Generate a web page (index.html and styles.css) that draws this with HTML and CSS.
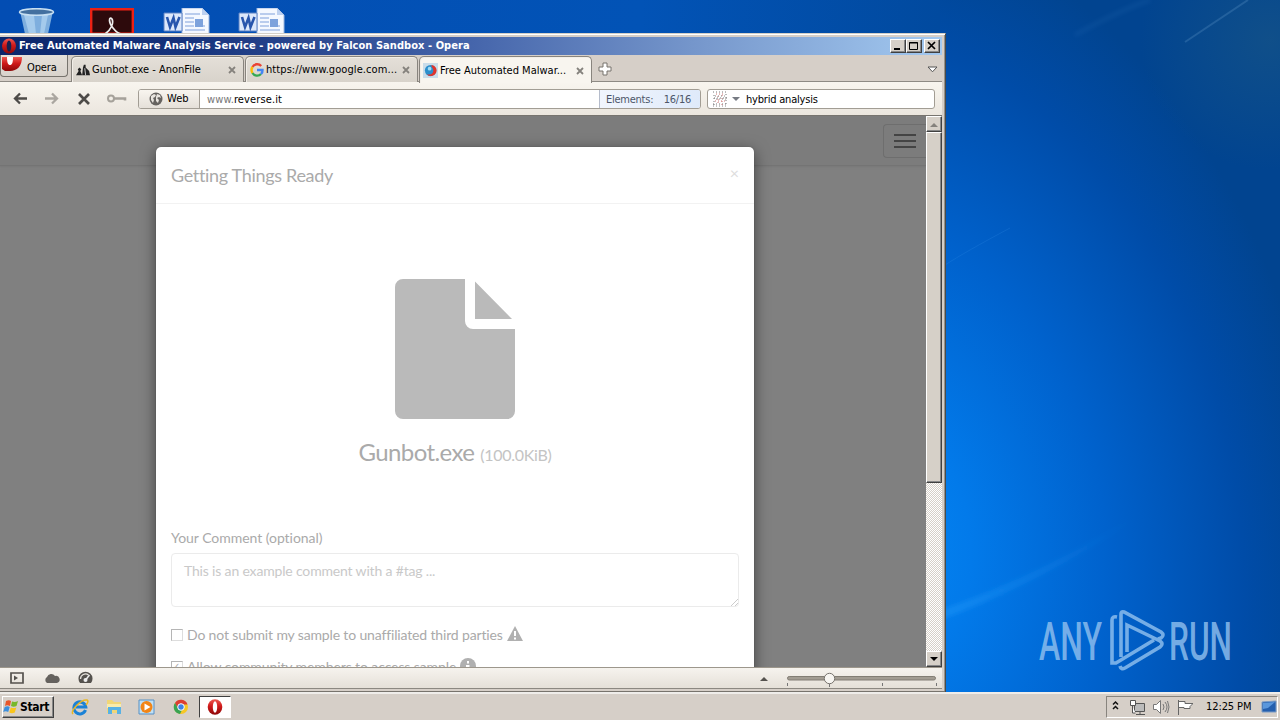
FILE: index.html
```html
<!DOCTYPE html>
<html lang="en">
<head>
<meta charset="utf-8">
<title>Desktop</title>
<link rel="stylesheet" href="styles.css">
</head>
<body>
<svg width="0" height="0" class="defs">
  <defs>
    <linearGradient id="red" x1="0" y1="0" x2="0" y2="1"><stop offset="0" stop-color="#ee5a52"/><stop offset=".45" stop-color="#d01a1a"/><stop offset="1" stop-color="#8c0808"/></linearGradient>
    <symbol id="opera" viewBox="0 0 16 16"><ellipse cx="8" cy="8" rx="7.3" ry="7.8" fill="url(#red)"/><ellipse cx="8" cy="8" rx="2.2" ry="5.8" fill="#fff"/></symbol>
    <symbol id="operadark" viewBox="0 0 16 16"><ellipse cx="8" cy="8" rx="7" ry="7.6" fill="url(#red)"/><ellipse cx="8" cy="8" rx="2.3" ry="5.6" fill="#16224f"/></symbol>
    <symbol id="word" viewBox="0 0 48 26"><path d="M19 0h20l7 7v19H19z" fill="#f4f8ff" stroke="#9db6dd"/><path d="M39 0v7h7z" fill="#bcd0f0"/><path d="M22 6h15M22 10h9M22 14h9M22 18h9M22 22h20M33 18h9" stroke="#7ea0dc" stroke-width="1.2"/><path d="M32 11h8v8h-8z" fill="#7da2dc"/><path d="M1 5h18v18H1z" fill="#dce8fb" stroke="#5d82c4"/><path d="M4 9l3 10 3.5-9 2 9 4-10" fill="none" stroke="#2856ad" stroke-width="2.6"/></symbol>
    <symbol id="x" viewBox="0 0 8 8"><path d="M1 1l6 6M7 1L1 7" stroke="#85827d" stroke-width="1.8"/></symbol>
  </defs>
</svg>
<div class="screen">
  <main class="desktop">
    <svg class="wallpaper" width="1280" height="692" viewBox="0 0 1280 692">
      <defs>
        <linearGradient id="top" x1="0" x2="1"><stop offset="0" stop-color="#034db3"/><stop offset=".5" stop-color="#0253b6"/><stop offset=".734" stop-color="#014a9f"/><stop offset="1" stop-color="#0d467b"/></linearGradient>
        <radialGradient id="glow" gradientUnits="userSpaceOnUse" cx="0" cy="0" r="1" gradientTransform="translate(880 540) rotate(-9) scale(450 640)"><stop offset="0" stop-color="#0487f4"/><stop offset=".2" stop-color="#027aea"/><stop offset=".5" stop-color="#0062cd"/><stop offset=".8" stop-color="#004ca8"/><stop offset="1" stop-color="#014490"/></radialGradient>
        <radialGradient id="haze" gradientUnits="userSpaceOnUse" cx="1270" cy="40" r="130"><stop offset="0" stop-color="#1c5884" stop-opacity=".55"/><stop offset="1" stop-color="#1c5884" stop-opacity="0"/></radialGradient>
        <linearGradient id="ray" x1="0" x2="1"><stop offset="0" stop-color="#2da6ff" stop-opacity=".32"/><stop offset="1" stop-color="#2da6ff" stop-opacity="0"/></linearGradient>
        <filter id="soft"><feGaussianBlur stdDeviation="2"/></filter>
      </defs>
      <path fill="url(#top)" d="M0 0h1280v692H0z"/>
      <path fill="url(#glow)" d="M940 0h340v692H940z"/>
      <path fill="url(#haze)" d="M1080 0h200v200h-200z"/>
      <path d="M935 612Q1030 580 1140 514Q1050 580 935 622z" fill="url(#ray)" filter="url(#soft)"/>
      <path d="M1185 42L1248 0" stroke="#5d94c6" stroke-width="2" opacity=".3"/>
      <path d="M945 265Q965 252 1010 228" fill="none" stroke="#3a98ea" opacity=".2"/>
      <path d="M1075 35Q1120 10 1150 0" fill="none" stroke="#3a80c4" stroke-width="4" opacity=".15" filter="url(#soft)"/>
    </svg>
    <div class="shortcuts">
      <svg width="38" height="26" viewBox="0 0 38 26"><path d="M2 3l5 23h23l5-23z" fill="#7eaede"/><path d="M6 7l5 19h7L16 7zM30 7l-4 19h-4l2-19z" fill="#b9d8f2" opacity=".65"/><ellipse cx="18.500" cy="4" rx="17" ry="3.300" fill="#44709f" stroke="#c7dff2" stroke-width="1.500"/></svg>
      <svg width="44" height="26" viewBox="0 0 44 26"><path d="M1 1h42v25H1z" fill="#2d0a0c" stroke="#ed2114" stroke-width="2.800"/><path d="M15 26c6-4 9-11 7-15-3-3-4 3 1 9 3 4 6 6 9 6" fill="none" stroke="#eee" stroke-width="1.700"/></svg>
      <svg width="48" height="26"><use href="#word"/></svg>
      <svg width="48" height="26"><use href="#word"/></svg>
    </div>

    <section class="window">
      <header class="titlebar">
        <svg width="16" height="16"><use href="#operadark"/></svg>
        <h1>Free Automated Malware Analysis Service - powered by Falcon Sandbox - Opera</h1>
        <div class="winbtns">
          <button><svg width="12" height="10"><path d="M2 8h6" stroke="#000" stroke-width="2"/></svg></button><button><svg width="12" height="10"><path d="M1.500 1.500h8v7h-8zM1 2h9" fill="none" stroke="#000"/></svg></button><button class="close"><svg width="12" height="10"><path d="M2 1l7 7M9 1L2 8" stroke="#000" stroke-width="1.700"/></svg></button>
        </div>
      </header>

      <nav class="tabs">
        <div class="menu"><svg width="21" height="18" viewBox="0 0 21 18"><path d="M1 2h20c0 9-5 14-12 14H4L1 14z" fill="url(#red)"/><path d="M6 2h6c0 6-1 8-3 8S6 8 6 2z" fill="#fff"/></svg><span>Opera</span></div>
        <div class="tab t1"><svg width="14" height="14" viewBox="0 0 16 14"><path d="M0 13l3-5-1-2 2-2 2 2-1 2 2 5zM7 13l1-9 1-3 2 0 0 3 4 4 1 5z" fill="#222"/><path d="M10 5l1 8" stroke="#ddd"/></svg><span class="l1">Gunbot.exe - AnonFile</span><svg class="x" width="8" height="8"><use href="#x"/></svg></div>
        <div class="tab t2"><svg width="14" height="14" viewBox="0 0 14 14" fill="none" stroke-width="2.400"><path d="M11.200 3A5.400 5.400 0 0 0 2.500 4" stroke="#ea4335"/><path d="M2.500 4a5.400 5.400 0 0 0 0 6" stroke="#fbbc05"/><path d="M2.500 10a5.400 5.400 0 0 0 8.500 1" stroke="#34a853"/><path d="M11 11a5 5 0 0 0 1.500-4H7" stroke="#4285f4"/></svg><span class="l2">https://www.google.com...</span><svg class="x" width="8" height="8"><use href="#x"/></svg></div>
        <div class="tab t3 active"><svg width="15" height="15" viewBox="0 0 16 16"><path d="M0 0h16v16H0z" fill="#c9dce9"/><circle cx="8" cy="8" r="6" fill="#2c8fcc"/><path d="M9 2a6 6 0 1 1-5 10c5 1 7-1 7-4S9 5 9 2z" fill="#e0342c"/><circle cx="7" cy="6" r="2" fill="#9edaf5"/></svg><span class="l3">Free Automated Malwar...</span><svg class="x" width="8" height="8"><use href="#x"/></svg></div>
        <svg class="plus" width="14" height="14"><path d="M5 1h4v4h4v4H9v4H5V9H1V5h4z" fill="#fff" stroke="#77736c"/></svg>
        <svg class="tabmenu" width="11" height="7"><path d="M1 1h9L5.500 5.800z" fill="#fff" stroke="#555"/></svg>
      </nav>

      <div class="toolbar">
        <svg class="navicons" width="130" height="20" viewBox="0 0 130 20" fill="none"><path d="M20 4.500L15 9.500l5 5M15 9.500h12" stroke="#4d4b48" stroke-width="2.300"/><path d="M52 4.500l5 5-5 5M57 9.500H45" stroke="#aaa6a0" stroke-width="2.300"/><path d="M79 5l10 10M89 5L79 15" stroke="#4d4b48" stroke-width="2.700"/><circle cx="111" cy="9.500" r="3" stroke="#a5a19a" stroke-width="2"/><path d="M114 9.500h11v2" stroke="#a5a19a" stroke-width="2.600"/></svg>
        <div class="address">
          <div class="badge"><svg width="14" height="14" viewBox="0 0 14 14"><circle cx="7" cy="7" r="6.500" fill="#666360"/><path d="M2 4l3-2 2 1-1 2-2 1 1 2-1 3-2-3zM8 2l3 1 1 3-2-1-2 1 2 2-1 3-2-2V5z" fill="#e9e5df"/></svg><span>Web</span></div>
          <div class="url"><span>www.</span>reverse.it</div>
          <div class="elements"><span>Elements:</span><span>16/16</span></div>
        </div>
        <div class="search"><svg width="30" height="16"><g fill="none" stroke-dasharray="1 2"><path d="M1 1h14M2 7h13M1 13h14M2 4v11M14 3v12" stroke="#777"/><path d="M4 3h9M3 10h10M6 5v9M10 4v10" stroke="#c77"/><path d="M3 5h10M4 8h10M1 15h14" stroke="#888"/></g><path d="M20 6h8l-4 4z" fill="#777b83"/></svg><span>hybrid analysis</span></div>
      </div>

      <div class="content">
        <div class="page">
          <div class="navbar"><div class="burger"><i></i><i></i><i></i></div></div>
          <div class="modal">
            <div class="mhead"><h2>Getting Things Ready</h2><span>×</span></div>
            <div class="mbody">
              <svg class="file" width="120" height="140"><path d="M8 0h62v42a8 8 0 0 0 8 8h42v82a8 8 0 0 1-8 8H8a8 8 0 0 1-8-8V8a8 8 0 0 1 8-8zM80 2.500L117 40H80z" fill="#bababa"/></svg>
              <div class="fname"><b>Gunbot.exe</b><small>(100.0KiB)</small></div>
              <label class="clabel"><span>Your Comment (optional)</span></label>
              <div class="area"><span>This is an example comment with a #tag ...</span><svg width="8" height="8"><path d="M1 8l7-7M5 8l3-3" stroke="#ccc"/></svg></div>
              <div class="check"><i></i><span class="c1">Do not submit my sample to unaffiliated third parties</span><svg width="16" height="15"><path d="M8 0l8 15H0z" fill="#b0b0b0"/><path d="M8 5v5M8 11.500v2" stroke="#fff" stroke-width="2"/></svg></div>
              <div class="check second"><i>✓</i><span class="c2">Allow community members to access sample</span><svg width="16" height="16"><circle cx="8" cy="8" r="8" fill="#b0b0b0"/><path d="M8 3v2.500M6 8h2.500v5" fill="none" stroke="#fff" stroke-width="2"/></svg></div>
            </div>
          </div>
        </div>
        <div class="scroll"><div class="sb"><svg width="8" height="5"><path d="M0 5l4-4 4 4z" fill="#85827d"/></svg></div><div class="thumb"></div><div class="track"></div><div class="sb"><svg width="8" height="5"><path d="M0 0h8L4 4z" fill="#000"/></svg></div></div>
      </div>

      <footer class="status">
        <svg width="90" height="16" viewBox="0 0 90 16"><path d="M1 3h12v10H1z" fill="none" stroke="#55524e" stroke-width="1.700"/><path d="M4 5.500v5L8 8z" fill="#55524e"/><path d="M37 13a3.500 3.500 0 0 1 0-6 4.500 4.500 0 0 1 8-1 3.500 3.500 0 0 1 2 7z" fill="#65625e"/><path d="M70 13a7 7 0 1 1 11 0z" fill="#55524e"/><path d="M70.500 9a5 5 0 0 1 8-4" stroke="#e9e5df" stroke-width="1.300" fill="none"/><circle cx="75.500" cy="10" r="2" fill="#eee"/><path d="M75.500 10l4-5" stroke="#eee" stroke-width="1.500"/></svg>
        <svg class="zoombar" width="180" height="19" viewBox="0 0 180 19"><path d="M0 12h8l-4-4z" fill="#55524e"/><rect x="27.500" y="7.500" width="148" height="3.500" rx="1.700" fill="#a29c92" stroke="#827d74"/><path d="M27.500 14v3M69.500 14v4M122.500 14v3M176.500 14v3" stroke="#777"/><circle cx="69.500" cy="9.500" r="5.200" fill="#f7f5f1" stroke="#77736d"/></svg>
      </footer>
    </section>

    <svg class="brand" width="200" height="70" viewBox="0 0 200 70">
      <g fill="#8fbfee" fill-opacity=".82" font-family="Roboto, sans-serif" font-size="53" font-weight="500"><text x="3" y="51.500" textLength="63" lengthAdjust="spacingAndGlyphs">ANY</text><text x="133" y="51.500" textLength="63" lengthAdjust="spacingAndGlyphs">RUN</text></g>
      <path d="M81 9q-5-1-5 3v43h4l38-23M85 49V6q0-3 3-2l37 20q4 3 0 6l-3 1M91 44V17l33 16q4 3 0 6L89 60q-4 2-5-2" fill="none" stroke="#8fbfee" stroke-opacity=".82" stroke-width="3.600"/>
    </svg>
  </main>

  <footer class="taskbar">
    <div class="start"><svg width="17" height="16" viewBox="0 0 17 16"><path d="M3 2q3-1.500 5 0L7 7q-3-1.500-5 0z" fill="#e8562a"/><path d="M9 2.500q3 1 6-.5l-1.500 5q-3 1.500-5.500 0z" fill="#77b82a"/><path d="M1.700 8q3-1.500 5 0l-1.500 5q-2.500-1.500-5 0z" fill="#3c8fdd"/><path d="M7.800 8.500q3 1 5.500 0l-1.500 5q-3 1.500-5.500 0z" fill="#f9c51c"/></svg><b>Start</b></div>
    <div class="launch">
      <svg width="18" height="18" viewBox="0 0 18 18"><path d="M14.500 12a6 6 0 1 1 .3-3H5" fill="none" stroke="#1b82d6" stroke-width="3"/><path d="M2 16C-1 13 10 1 16 2c2 1 0 4-1 5" fill="none" stroke="#eab721" stroke-width="1.500"/></svg>
      <svg width="18" height="18" viewBox="0 0 18 18"><path d="M2 2h5l2 2h7v11H2z" fill="#f1d677"/><path d="M2 6h14v4H2z" fill="#f9ebab"/><path d="M3 16V9h13v7h-4v-4H7v4z" fill="#58b1e4"/></svg>
      <svg width="18" height="18" viewBox="0 0 18 18"><path d="M1 2h15v14H1z" fill="#bfe0f5" stroke="#5790c5"/><circle cx="8.500" cy="9" r="6" fill="#f28516"/><path d="M6.500 5.500v7l6-3.500z" fill="#fff"/></svg>
      <svg width="18" height="18" viewBox="0 0 18 18"><circle cx="9" cy="9" r="7" fill="#f6c725"/><path d="M3 5a7 7 0 0 1 12.500 1.500H9L6 11z" fill="#dc3e33"/><path d="M3 5l4 7 3 0-2 4A7 7 0 0 1 3 5z" fill="#39a352"/><circle cx="9" cy="9" r="3.300" fill="#3e83e6" stroke="#fff"/></svg>
    </div>
    <div class="task"><svg width="16" height="16"><use href="#opera"/></svg></div>
    <div class="tray">
      <svg width="82" height="18" viewBox="0 0 82 18" fill="none"><path d="M2 6.500l2.500-2.500 2.500 2.500M2 11l2.500-2.500 2.500 2.500" stroke="#111" stroke-width="1.500"/><path d="M23.500 5.500h10v8h-10zM25 16.500h9M29 14v2" fill="#bbb" stroke="#555"/><path d="M19.500 2.500h5v5h-5zM21.500 8v7h3" fill="#fff" stroke="#555"/><path d="M42.500 6.500h3l4-4v13l-4-4h-3z" fill="#fff" stroke="#777"/><path d="M52 6q2 3 0 6M54 4q4 5 0 10M56.500 3q3 6 0 12" stroke="#777"/><path d="M67.500 17V2M68 3.500h6v2h8l-3 3v2h-6v-1h-5" fill="#fff" stroke="#666"/></svg>
      <span>12:25 PM</span>
      <svg width="16" height="16"><path d="M1 3l14-1v11H1z" fill="#245fae" stroke="#7b9cc6"/><path d="M2 4l12-1-7 6-5 1z" fill="#5a97dc"/></svg>
    </div>
  </footer>
</div>
</body>
</html>
```
FILE: styles.css
```css
* { box-sizing: border-box; }
body { margin: 0; overflow: hidden; font: 11px/14px "DejaVu Sans Condensed", "DejaVu Sans", sans-serif; color: #000; }
svg { display: block; flex: none; }
h1, h2 { margin: 0; }
.defs { position: absolute; }
.screen { width: 1280px; height: 720px; display: flex; flex-direction: column; overflow: hidden; }
.desktop { height: 692px; position: relative; overflow: hidden; }
.wallpaper { position: absolute; inset: 0; }
.shortcuts { position: relative; display: flex; padding: 8px 0 0 18px; }
.shortcuts svg:nth-child(2) { margin-left: 34px; }
.shortcuts svg:nth-child(3) { margin-left: 29px; }
.shortcuts svg:nth-child(4) { margin-left: 27px; }

.window { position: absolute; left: 0; top: 33px; width: 946px; height: 659px; background: #d6cfc8; border-top: 1px solid #d4d0c8; border-right: 1px solid #4c4b48; padding: 3px 3px 0 0; box-shadow: inset 0 1px #fff, inset -1px 0 #96928b; display: flex; flex-direction: column; }
.window > * { flex-shrink: 0; }
.titlebar { height: 18px; background: linear-gradient(90deg, #0b266b 0%, #16337c 20%, #4565ab 50%, #7899cd 75%, #a3c9f0 100%); display: flex; align-items: center; padding: 0 2px 0 1px; color: #fff; }
.titlebar h1 { font-size: 11px; line-height: 16px; margin-left: 2px; white-space: nowrap; letter-spacing: .05px; }
.winbtns { display: flex; margin-left: auto; }
.winbtns button { width: 16px; height: 14px; padding: 1px; border: 1px solid; border-color: #fff #404040 #404040 #fff; box-shadow: inset -1px -1px #888; background: #d6d0c8; }
.winbtns .close { margin-left: 2px; }

.tabs { height: 27px; display: flex; border-bottom: 1px solid #8e8a84; background: #d6cfc8; }
.menu { width: 68px; height: 22px; border: 1px solid #77736d; border-top: 0; border-radius: 0 0 4px 4px; display: flex; background: linear-gradient(#e5e0da, #d9d3cc); }
.menu span { margin: 6px 0 0 5px; letter-spacing: -.1px; }
.tab { height: 26px; margin-top: 1px; border: 1px solid #88847e; border-bottom: 0; border-radius: 5px 5px 0 0; display: flex; align-items: center; background: linear-gradient(#e4dfd8, #d8d3cb); padding: 1px 7px 0 4px; white-space: nowrap; box-shadow: inset 1px 1px #f2eee8; }
.tab span { margin-left: 2px; }
.tab .x { margin-left: auto; }
.l2 { letter-spacing: .08px; }
.t1 { width: 173px; margin-left: 3px; }
.t2 { width: 173px; margin-left: 1px; }
.t3 { width: 173px; margin-left: 1px; padding-left: 3px; }
.tab.active { background: #f8f5ef; height: 27px; z-index: 1; }
.plus { margin: 7px 0 0 6px; }
.tabmenu { margin: 11px 4px 0 auto; }

.toolbar { height: 34px; background: linear-gradient(#f8f5ef, #ebe6de); display: flex; border-bottom: 1px solid #77746f; }
.navicons { margin: 7px 8px 0 0; }
.address { width: 563px; height: 20px; margin-top: 7px; border: 1px solid #a29d94; border-radius: 3px; display: flex; background: #fff; overflow: hidden; line-height: 18px; }
.badge { width: 61px; border-right: 1px solid #a29d94; background: linear-gradient(#f8f5ef, #e5e0d9); display: flex; align-items: center; padding-left: 10px; }
.badge span { margin-left: 4px; }
.url { flex: 1; padding: 1px 0 0 7px; letter-spacing: .12px; line-height: 17px; }
.url span { color: #777; }
.elements { width: 101px; border-left: 1px solid #b5bccb; background: linear-gradient(90deg, #f1f5fd, #dfeafa); display: flex; padding: 1px 9px 0 6px; justify-content: space-between; color: #4d5669; letter-spacing: -.25px; }
.search { width: 228px; height: 20px; margin: 7px 0 0 6px; border: 1px solid #a29d94; border-radius: 3px; background: #fff; display: flex; padding: 1px 0 0 4px; line-height: 17px; letter-spacing: -.2px; }
.search span { margin-left: 4px; }

.content { height: 551px; display: flex; overflow: hidden; }
.page { width: 926px; background: #808080; overflow: hidden; position: relative; }
.navbar { height: 50px; background: #7c7c7c; border-bottom: 1px solid #747474; box-shadow: 0 1px 2px #777; display: flex; justify-content: flex-end; }
.burger { width: 43px; height: 34px; margin-top: 8px; border: 1px solid #6e6e6e; border-right: 0; border-radius: 4px 0 0 4px; display: flex; flex-direction: column; gap: 4px; padding: 9px 0 0 10px; }
.burger i { width: 22px; height: 2px; background: #444; }
.modal { position: absolute; left: 156px; top: 31px; width: 598px; height: 560px; background: #fff; border-radius: 5px 5px 0 0; box-shadow: 0 4px 15px rgba(0, 0, 0, .5), 0 0 1px #555; font-family: Lato, sans-serif; color: #aaa; }
.mhead { height: 57px; border-bottom: 1px solid #f2f2f2; padding: 15px 15px; display: flex; justify-content: space-between; }
.mhead h2 { font-size: 18px; line-height: 26px; font-weight: 400; white-space: nowrap; letter-spacing: -.32px; }
.mhead span { font-size: 16px; line-height: 22px; color: #ddd; }
.mbody { padding: 75px 15px 0; display: flex; flex-direction: column; font-size: 14px; line-height: 20px; white-space: nowrap; }
.file { align-self: center; }
.fname { height: 34px; margin-top: 16px; line-height: 34px; display: flex; justify-content: center; align-items: baseline; gap: 6px; }
.fname b { font-size: 24px; font-weight: 400; letter-spacing: -.6px; }
.fname small { font-size: 16px; color: #c4c4c4; letter-spacing: -.3px; }
.clabel { margin-top: 59px; height: 20px; letter-spacing: -.04px; }
.area { height: 54px; margin-top: 5px; border: 1px solid #ebebeb; border-radius: 4px; padding: 7px 0 0 12px; color: #c9c9c9; display: flex; letter-spacing: -.17px; }
.area svg { margin: 37px 0 0 auto; }
.check { display: flex; margin-top: 18px; height: 20px; letter-spacing: -.15px; }
.check i { width: 12px; height: 12px; margin: 4px 4px 0 0; border: 1px solid #b5b5b5; border-right-color: #ddd; border-bottom-color: #ddd; font: 10px/10px "DejaVu Sans", sans-serif; }
.check svg { margin: 1px 0 0 4px; }
.second { margin-top: 12px; letter-spacing: -.1px; }
.scroll { width: 16px; display: flex; flex-direction: column; background: #d6d0c8; }
.sb { height: 16px; background: #d6d0c8; border: 1px solid; border-color: #fff #404040 #404040 #fff; box-shadow: inset -1px -1px #888; display: flex; align-items: center; justify-content: center; }
.thumb { height: 351px; border: 1px solid; border-color: #fff #404040 #404040 #fff; box-shadow: inset -1px -1px #888; }
.track { flex: 1; background: repeating-conic-gradient(#fff 0 25%, #d6d0c8 0 50%) 0 0 / 2px 2px; }

.status { height: 22px; border-top: 1px solid #9d978c; border-bottom: 1px solid #8c8881; background: linear-gradient(#f6f3ee, #e5e0d8); display: flex; justify-content: space-between; padding: 2px 2px 0 10px; margin-bottom: 2px; }
.zoombar { margin-top: -1px; }
.window::after { content: ""; height: 1px; margin-right: -3px; background: #77736d; }
.brand { position: absolute; left: 1036px; top: 608px; }

.taskbar { height: 28px; background: #d6cfc8; border-top: 2px solid #efedea; display: flex; padding: 2px 2px 1px; }
.start { width: 52px; height: 22px; border: 1px solid; border-color: #fff #404040 #404040 #fff; box-shadow: inset -1px -1px #888; display: flex; align-items: center; }
.start b { font-size: 12px; letter-spacing: -.3px; }
.launch { display: flex; gap: 15.500px; margin: 2px 0 0 17px; }
.task { width: 32px; height: 22px; margin-left: 9px; border: 1px solid; border-color: #404040 #fff #fff #404040; background: #fff; display: flex; align-items: center; justify-content: center; }
.tray { width: 172px; height: 22px; margin-left: auto; border: 1px solid; border-color: #88847e #fff #fff #88847e; display: flex; align-items: center; padding-left: 4px; }
.tray span { flex: 1; margin: 0 0 0 13px; white-space: nowrap; letter-spacing: -.1px; }
```
